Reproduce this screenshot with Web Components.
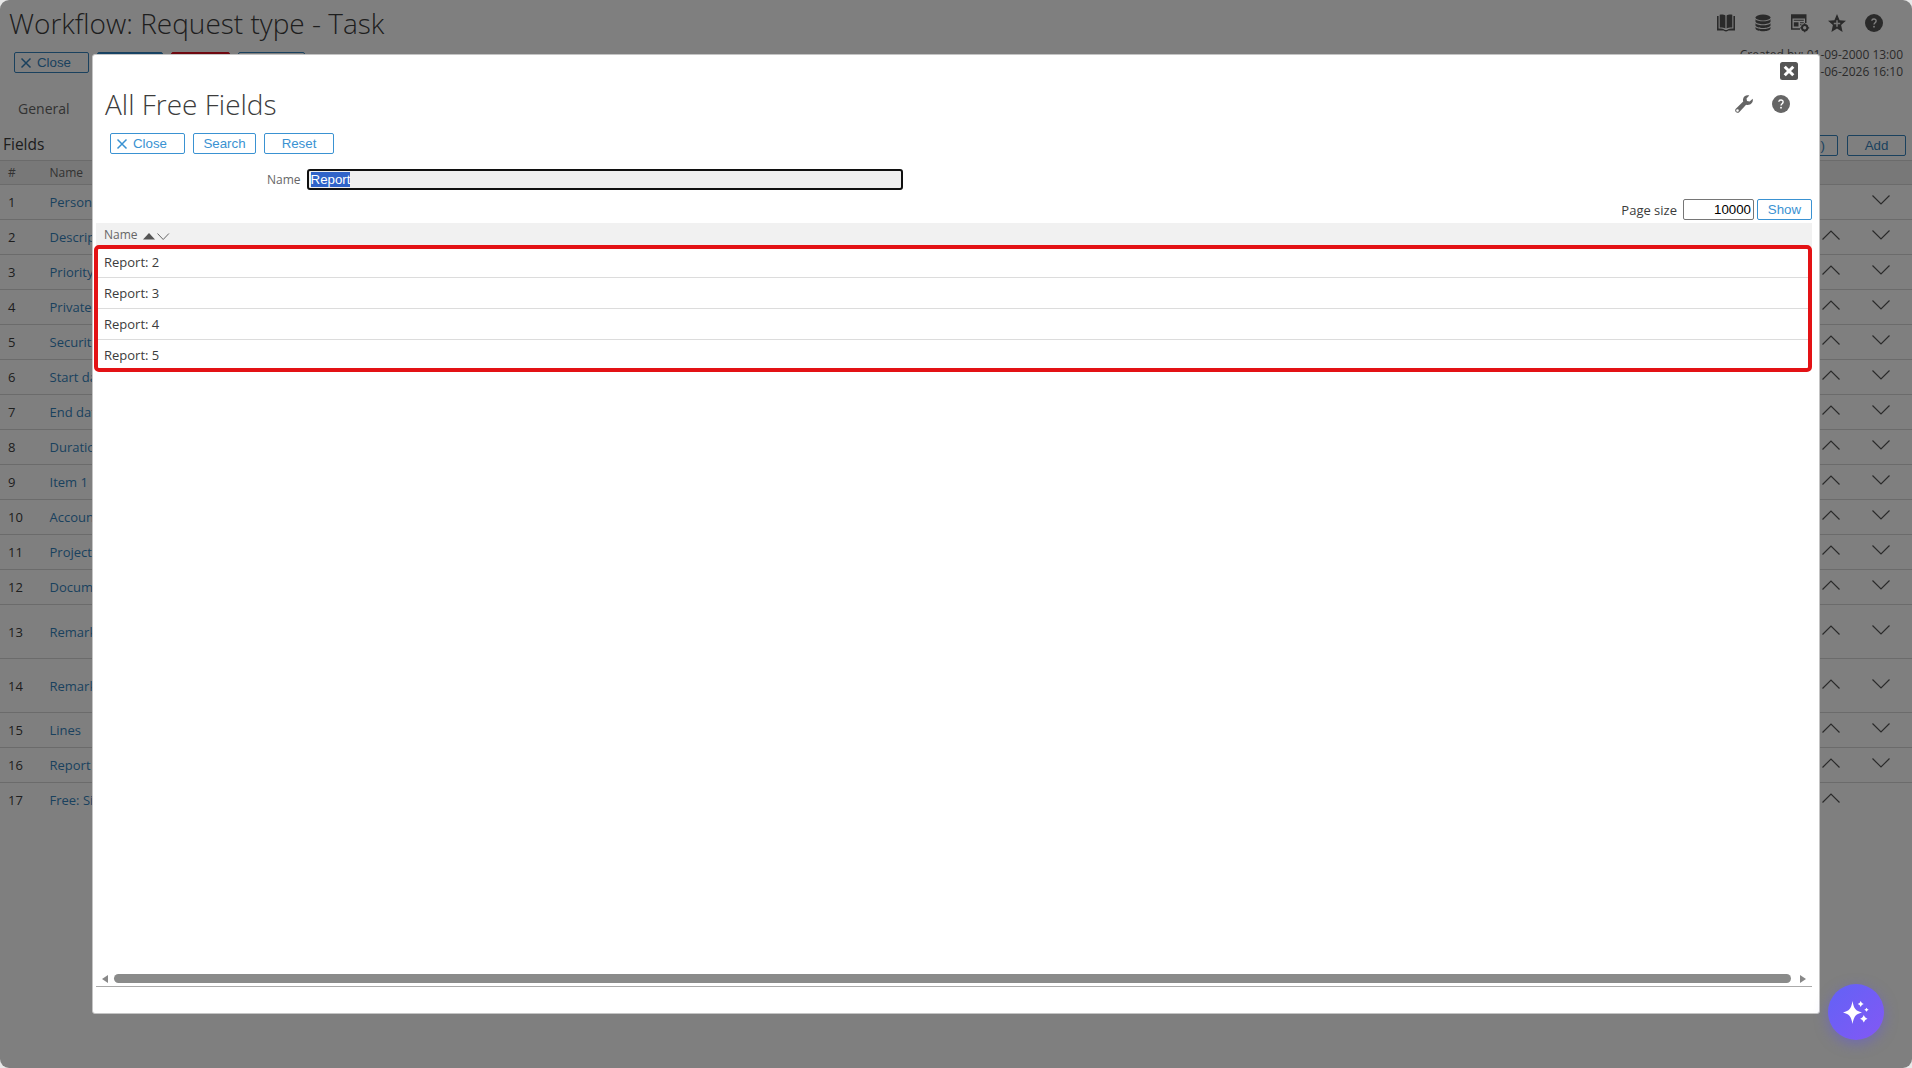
<!DOCTYPE html>
<html lang="en">
<head>
<meta charset="utf-8">
<title>Workflow: Request type - Task</title>
<style>
:root {
  --color-text: #3c3c3c;
  --color-label: #666;
  --color-link: #3a92d2;
  --color-border: #d6d6d6;
  --color-head: #f1f1f1;
}
html, body {
  height: 100%;
}
body {
  margin: 0;
  overflow: hidden;
  background: #e8e8e8;
  color: var(--color-text);
  font: 13px/18px "Open Sans", sans-serif;
}
</style>
</head>
<body>
<workflow-app></workflow-app>

<script>
const icons = {
  book: '<path d="M0 2h1.600v12.600c3 0 5 .2 6.400 1.400h2c1.400-1.200 3.400-1.400 6.400-1.400V2H18v14.500h-6.500c-.6 0-.8 1-2.500 1s-1.900-1-2.500-1H0zM2.700.7C5 .4 7.200.6 8.400 1.400V14.500C7 13.600 5 13.300 2.700 13.400zM15.300.7C13 .4 10.800.6 9.600 1.400V14.500c1.400-.9 3.400-1.200 5.700-1.100z"/>',
  database: '<ellipse cx="9" cy="3.500" rx="7.500" ry="3"/><path d="M1.500 5.200c2 2.700 13 2.700 15 0v2.500c-1 3.300-14 3.300-15 0zM1.500 9.200c2 2.700 13 2.700 15 0v2.200c-1 3.300-14 3.300-15 0zM1.500 13c2 2.700 13 2.700 15 0v1.500c-1 3.700-14 3.700-15 0z"/>',
  form: '<path d="M0 .3h15.500V9H14V4.500H1.500v9.700H9v1.500H0z"/><path d="M2.800 8.200h4.700v4.300H2.800zM2.800 5.800h10v1h-10zM9 8.200h3.800v1H9zM9 10.200h1.500v1H9z"/><circle cx="13.700" cy="13.800" r="2.700" fill="none" stroke="currentColor" stroke-width="2"/><path d="M13.700 9.300v9M9.200 13.800h2M16.200 13.800h2" stroke="currentColor" stroke-width="1.200" stroke-dasharray="2 5"/>',
  star: '<path d="M9 0l2.600 6.200 6.400.5-4.900 4.300L14.600 18 9 14.400 3.400 18l1.500-7L0 6.700l6.400-.5z"/><path d="M9 6.300v6.400M5.800 9.500h6.400" stroke="#ededed" stroke-width="1.500"/>',
  help: '<circle cx="9" cy="9" r="9"/><path d="M6.800 6.800C7 4.400 11.200 4.500 11.100 6.900c0 1.700-2.100 1.900-2.100 3.700" fill="none" stroke="#fff" stroke-width="1.400"/><rect x="8.200" y="11.900" width="1.600" height="1.600" fill="#fff"/>',
  wrench: '<path fill-rule="evenodd" d="M17.700 3.800L14.600 6.500 12 5.900 11.500 3.500 14.300.5C11.700-.6 8.500 1 8 4.200c-.1.800 0 1.500.2 2.200L.8 13.800c-2 2.200 1.200 5.300 3.400 3.400l6.900-7.400c4 1.100 7.600-2.100 6.600-6zM2.500 14.200a1.300 1.300 0 1 1 0 2.600 1.300 1.300 0 0 1 0-2.600z"/>',
  close: '<rect width="18" height="18" rx="2.500"/><path d="M4.700 4.700l8.600 8.600M13.300 4.700l-8.600 8.600" stroke="#fff" stroke-width="3"/>',
  cross: '<path d="M4.500 4.500l9 9M13.500 4.500l-9 9" stroke="currentColor" stroke-width="1.500"/>',
  up: '<path d="M.5 13.500L9 5l8.500 8.500" fill="none" stroke="currentColor" stroke-width="1.200"/>',
  down: '<path d="M.5 4.500L9 13l8.500-8.500" fill="none" stroke="currentColor" stroke-width="1.200"/>',
};

class UiIcon extends HTMLElement {
  connectedCallback() {
    this.attachShadow({ mode: 'open' }).innerHTML = `
      <style>
        :host { display: block; width: 18px; height: 18px; flex: none; }
        svg { display: block; width: 100%; height: 100%; overflow: visible; }
      </style>
      <svg viewBox="0 0 18 18" fill="currentColor">${icons[this.getAttribute('name')] || ''}</svg>`;
  }
}
customElements.define('ui-icon', UiIcon);

class UiButton extends HTMLElement {
  connectedCallback() {
    this.attachShadow({ mode: 'open' }).innerHTML = `
      <style>
        :host { display: block; height: 21px; flex: none; }
        button {
          display: flex;
          align-items: center;
          justify-content: center;
          gap: 2px;
          box-sizing: border-box;
          width: 100%;
          height: 21px;
          padding: 0;
          border: 1px solid var(--color-link);
          border-radius: 2px;
          background: #fff;
          color: var(--color-link);
          font: 13.3px/19px "Liberation Sans", sans-serif;
          white-space: nowrap;
        }
        :host([kind="primary"]) button { background: #2e8bd0; }
        :host([kind="danger"]) button { background: #e01020; border-color: #e01020; }
        :host([icon]) button { justify-content: flex-start; padding-left: 2px; }
      </style>
      <button>${this.hasAttribute('icon') ? `<ui-icon name="${this.getAttribute('icon')}"></ui-icon>` : ''}<slot></slot></button>`;
  }
}
customElements.define('ui-button', UiButton);

class FieldRow extends HTMLElement {
  connectedCallback() {
    const up = this.hasAttribute('up') ? '<ui-icon name="up"></ui-icon>' : '';
    const down = this.hasAttribute('down') ? '<ui-icon name="down"></ui-icon>' : '';
    this.attachShadow({ mode: 'open' }).innerHTML = `
      <style>
        :host {
          display: grid;
          grid-template-columns: 41.5px 1fr 50px 40px;
          align-items: center;
          box-sizing: border-box;
          height: 35px;
          padding-left: 8px;
          border-bottom: 1px solid var(--color-border);
        }
        :host([tall]) { height: 54px; }
        :host([last]) { border-color: transparent; }
        .link { color: var(--color-link); }
        .move { padding-bottom: 4px; color: #555; }
      </style>
      <span>${this.getAttribute('no')}</span>
      <span class="link"><slot></slot></span>
      <span class="move">${up}</span>
      <span class="move">${down}</span>`;
  }
}
customElements.define('field-row', FieldRow);

const fields = ['Person', 'Descrip', 'Priority', 'Private', 'Securit', 'Start da', 'End dat',
  'Duratio', 'Item 1', 'Accoun', 'Project', 'Docum', 'Remark', 'Remark', 'Lines', 'Report', 'Free: Si'];

class WorkflowPage extends HTMLElement {
  connectedCallback() {
    const rows = fields.map((name, i) => `
      <field-row no="${i + 1}" ${i > 0 ? 'up' : ''} ${i < fields.length - 1 ? 'down' : 'last'}
        ${i === 12 || i === 13 ? 'tall' : ''}>${name}</field-row>`).join('');
    this.attachShadow({ mode: 'open' }).innerHTML = `
      <style>
        :host {
          --color-link: #3583bd;
          display: flex;
          flex-direction: column;
          height: 100%;
          background: #fff;
        }
        header { display: flex; justify-content: space-between; height: 52px; }
        h1 { margin: 3px 0 0 9px; font-size: 28px; line-height: 40px; font-weight: 300; }
        .tools { display: flex; gap: 19px; padding: 14px 29px 0 0; color: #555; }
        .actions { display: flex; gap: 8px; height: 45px; padding-left: 14px; }
        .meta { margin: -6px 9px 0 auto; font-size: 12px; line-height: 17px; text-align: right; color: #555; }
        .tab { height: 23px; padding-left: 18px; font-size: 14px; line-height: 23px; color: #666; }
        .bar { display: flex; align-items: center; gap: 9px; height: 40px; padding: 0 6px 0 3px; }
        .bar h2 { flex: 1; margin: 8px 0 0; font-size: 15.5px; font-weight: 400; }
        .bar ui-button { margin-top: 10px; }
        .head {
          display: grid;
          grid-template-columns: 41.5px 1fr;
          align-items: center;
          box-sizing: border-box;
          height: 25px;
          padding-left: 8px;
          border: solid var(--color-border);
          border-width: 1px 0;
          background: var(--color-head);
          color: var(--color-label);
          font-size: 12px;
        }
      </style>
      <header>
        <h1>Workflow: Request type - Task</h1>
        <div class="tools">
          <ui-icon name="book"></ui-icon>
          <ui-icon name="database"></ui-icon>
          <ui-icon name="form"></ui-icon>
          <ui-icon name="star"></ui-icon>
          <ui-icon name="help"></ui-icon>
        </div>
      </header>
      <div class="actions">
        <ui-button icon="cross" style="width:75px">Close</ui-button>
        <ui-button kind="primary" style="width:66px"></ui-button>
        <ui-button kind="danger" style="width:59px"></ui-button>
        <ui-button style="width:67px"></ui-button>
        <div class="meta">Created by: 01-09-2000 13:00<br>-06-2026 16:10</div>
      </div>
      <div class="tab">General</div>
      <div class="bar">
        <h2>Fields</h2>
        <ui-button style="width:38px">n)</ui-button>
        <ui-button style="width:59px">Add</ui-button>
      </div>
      <div class="head"><span>#</span><span>Name</span></div>
      ${rows}`;
  }
}
customElements.define('workflow-page', WorkflowPage);

class FieldsDialog extends HTMLElement {
  connectedCallback() {
    this.attachShadow({ mode: 'open' }).innerHTML = `
      <style>
        :host {
          display: flex;
          flex-direction: column;
          box-sizing: border-box;
          width: 1728px;
          height: 960px;
          padding: 7px 7px 26px 3px;
          border: 1px solid #c4c4c4;
          border-radius: 3px;
          background: #fff;
        }
        .top { display: flex; justify-content: flex-end; height: 18px; padding-right: 14px; color: #555; }
        .title { display: flex; align-items: center; gap: 19px; height: 48px; padding: 0 22px 0 9px; color: #666; }
        h1 { flex: 1; margin: 0; color: var(--color-text); font-size: 28px; line-height: 40px; font-weight: 300; }
        .actions { display: flex; gap: 8px; height: 41px; padding: 5px 0 0 14px; box-sizing: border-box; }
        .criteria { display: flex; align-items: center; gap: 6px; height: 21px; padding-left: 171px; }
        .criteria label { color: var(--color-label); font-size: 12px; line-height: 18px; }
        .box {
          display: flex;
          align-items: center;
          box-sizing: border-box;
          height: 21px;
          border: 1px solid #767676;
          border-radius: 2px;
          color: #000;
          font: 13.3px/15px "Liberation Sans", sans-serif;
        }
        .name { width: 596px; padding-left: 2px; border: 2px solid #101010; border-radius: 3px; background: #efefef; }
        .name span { background: #3063c8; color: #fff; }
        .size { width: 71px; justify-content: flex-end; padding-right: 2px; }
        .paging { display: flex; align-items: center; justify-content: flex-end; gap: 3px; height: 21px; margin: 9px 0 3px; }
        .paging label { margin-right: 3px; }
        .head {
          display: flex;
          align-items: center;
          gap: 2px;
          height: 24px;
          padding-left: 8px;
          background: var(--color-head);
          color: var(--color-label);
          font-size: 12px;
        }
        .head svg { margin: 4px 0 0 3px; }
        .list { position: relative; flex: 1; }
        .row { box-sizing: border-box; height: 31px; padding-left: 8px; line-height: 30px; border-bottom: 1px solid #dcdcdc; }
        .row.last { border: 0; }
        .mark {
          position: absolute;
          inset: -2px 0 auto -2px;
          box-sizing: border-box;
          height: 127px;
          border: 4px solid #e31215;
          border-radius: 5px;
        }
        .scroll {
          display: flex;
          align-items: center;
          gap: 6px;
          height: 15px;
          padding: 0 6px;
          border-bottom: 1px solid #aaa;
          color: #888;
        }
        .scroll div { flex: 1; height: 9px; margin-right: 3px; border-radius: 5px; background: #8a8b8a; }
      </style>
      <div class="top"><ui-icon name="close"></ui-icon></div>
      <div class="title">
        <h1>All Free Fields</h1>
        <ui-icon name="wrench"></ui-icon>
        <ui-icon name="help"></ui-icon>
      </div>
      <div class="actions">
        <ui-button icon="cross" style="width:75px">Close</ui-button>
        <ui-button style="width:63px">Search</ui-button>
        <ui-button style="width:70px">Reset</ui-button>
      </div>
      <div class="criteria"><label>Name</label><div class="box name"><span>Report</span></div></div>
      <div class="paging">
        <label>Page size</label>
        <div class="box size">10000</div>
        <ui-button style="width:55px">Show</ui-button>
      </div>
      <div class="head">
        <span>Name</span>
        <svg width="28" height="8"><path d="M0 6.500L6 0l6 6.500z" fill="#555"/><path d="M14.500.5l5.700 6 5.700-6" fill="none" stroke="#666"/></svg>
      </div>
      <div class="list">
        <div class="row">Report: 2</div>
        <div class="row">Report: 3</div>
        <div class="row">Report: 4</div>
        <div class="row last">Report: 5</div>
        <div class="mark"></div>
      </div>
      <div class="scroll">
        <svg width="6" height="8"><path d="M6 0v8L0 4z" fill="currentColor"/></svg>
        <div></div>
        <svg width="6" height="8"><path d="M0 0v8l6-4z" fill="currentColor"/></svg>
      </div>`;
  }
}
customElements.define('fields-dialog', FieldsDialog);

class AssistButton extends HTMLElement {
  connectedCallback() {
    this.attachShadow({ mode: 'open' }).innerHTML = `
      <style>
        :host {
          display: grid;
          place-items: center;
          width: 56px;
          height: 56px;
          border-radius: 50%;
          background: linear-gradient(135deg, #6262f6, #8358f4);
          box-shadow: 0 4px 13px rgba(100, 88, 230, .5);
        }
      </style>
      <svg width="26" height="24" viewBox="0 0 26 24" fill="#fff">
        <path d="M9.500 1C11 9 12.500 10.700 19 12.500 12.500 14.300 11 16 9.500 24 8 16 6.500 14.300 0 12.500 6.500 10.700 8 9 9.500 1z"/>
        <path d="M17.700 1q.8 2.400 3 3-2.200.6-3 3-.8-2.400-3-3 2.200-.6 3-3zM23.500 7.700q.6 1.600 2.200 2-1.600.4-2.200 2-.6-1.600-2.200-2 1.600-.4 2.200-2zM20.800 15q1 2.900 3.700 3.700-2.700.8-3.700 3.700-1-2.900-3.700-3.700 2.700-.8 3.700-3.700z"/>
      </svg>`;
  }
}
customElements.define('assist-button', AssistButton);

class WorkflowApp extends HTMLElement {
  connectedCallback() {
    this.attachShadow({ mode: 'open' }).innerHTML = `
      <style>
        :host { display: block; position: relative; height: 100vh; overflow: hidden; border-radius: 9px; }
        .shade { position: absolute; inset: 0; background: rgba(0, 0, 0, .5); }
        fields-dialog { position: absolute; left: 92px; top: 54px; }
        assist-button { position: absolute; right: 28px; bottom: 28px; }
      </style>
      <workflow-page></workflow-page>
      <div class="shade"></div>
      <fields-dialog></fields-dialog>
      <assist-button></assist-button>`;
  }
}
customElements.define('workflow-app', WorkflowApp);
</script>
</body>
</html>
